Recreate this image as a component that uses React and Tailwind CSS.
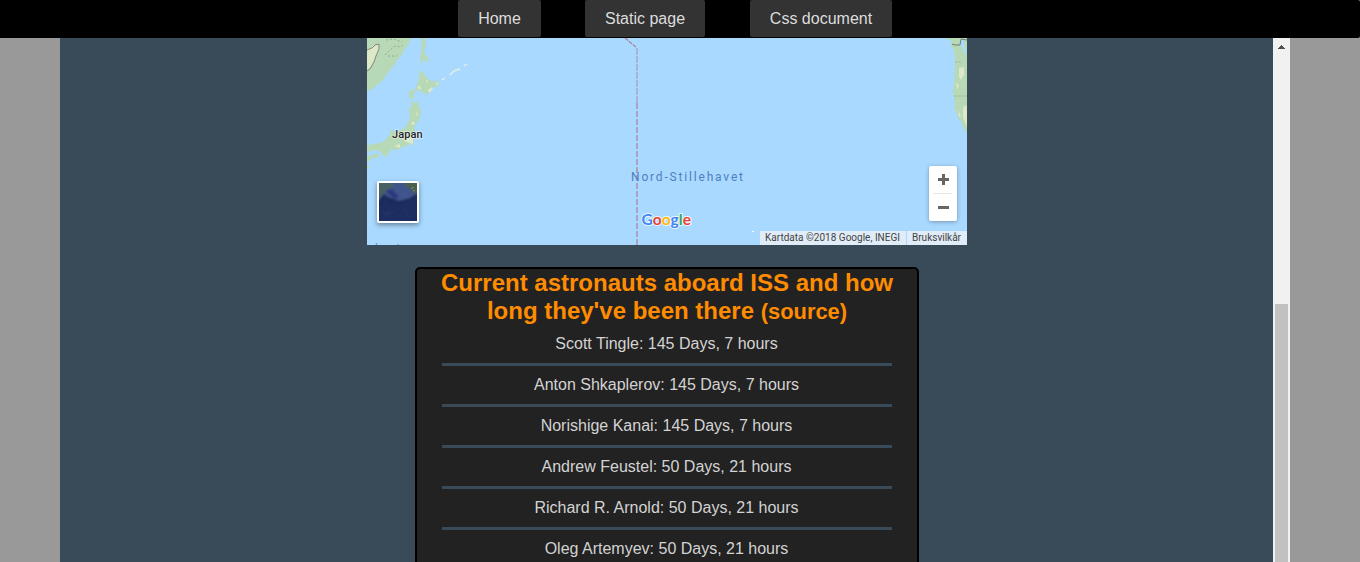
const astronauts = [
  "Scott Tingle: 145 Days, 7 hours",
  "Anton Shkaplerov: 145 Days, 7 hours",
  "Norishige Kanai: 145 Days, 7 hours",
  "Andrew Feustel: 50 Days, 21 hours",
  "Richard R. Arnold: 50 Days, 21 hours",
  "Oleg Artemyev: 50 Days, 21 hours",
];

function NavBar() {
  return (
    <nav className="flex h-[38px] shrink-0 justify-center rounded-r-[2px] bg-black pr-[10px] text-base leading-[37px] text-[#ddd]">
      <a className="mr-11 h-[37px] w-[83px] rounded-[2px] bg-[#333] text-center">Home</a>
      <a className="mr-[45px] h-[37px] w-[120px] rounded-[2px] bg-[#333] text-center">Static page</a>
      <a className="h-[37px] w-[142px] rounded-[2px] bg-[#333] text-center">Css document</a>
    </nav>
  );
}

function MapDrawing() {
  return (
    <svg width="600" height="207" viewBox="0 0 600 207" className="block">
      <rect width="600" height="207" fill="#a9d9ff" />
      <g fill="#b7d9b5">
        <path d="M0 0H44L41 7 37 12 34 18 30 22 28 26 23 32 19 37 16 42 10 47 5 51 0 53Z" />
        <path d="M54 0H58L59 7 57 15 60 18 62 22 61 24 56 21 55 26 54 26 53 20 55 10Z" />
        <path d="M53 31 56 35 61 41 66 44 71 42 71 46 73 48 67 49 63 51 61 57 55 54 50 52 46 56 48 60 44 61 42 58 42 54 46 51 47 53 50 47 52 40Z" />
        <path d="M44 63 48 65 51 63 51 66 54 74 52 82 48 87 48 93 47 98 46 107 43 107 43 104 40 108 36 109 30 112 24 111 21 117 17 119 14 114 9 112 0 114V107L13 105 17 103 21 99 24 95 23 92 26 93 30 94 36 91 40 87 43 80 42 70 45 68Z" />
        <path d="M0 118 5 117 11 115 12 119 5 120 2 123 0 124Z" />
        <path d="M578 0H600V95L596 89 594 83 591 80 590 76 587 70 588 65 586 54 588 35 588 17 586 10 583 6 586 4Z" />
      </g>
      <path d="M594 1 597 3 599 15 597 16 595 8 591 8 594 5Z" fill="#a9d9ff" />
      <g fill="#dce8c8">
        <path d="M0 12 4 10 7 7 12 6 12 12 9 18 7 23 3 30 0 32Z" />
        <path d="M50 50 53 47 54 52ZM61 52 65 49 66 51 62 55ZM68 46 71 44 71 47ZM43 86 47 83 48 87ZM37 101 46 98 46 106 39 104ZM49 76 51 73 50 79ZM27 108 33 106 33 110ZM59 42 61 43 60 46Z" />
        <path d="M592 30 597 29 597 37 594 42 592 39ZM596 69 600 67V89L596 80ZM591 72 594 78 592 79ZM589 44 592 48 590 51Z" />
      </g>
      <path d="M0 128H3L1 130H0Z" fill="#c8dd8e" />
      <g fill="none" stroke="#8cae91" strokeWidth="1" strokeDasharray="2 2">
        <path d="M18 17 23 12 28 8 34 9 37 6M19 2 26 1 35 4M21 18 30 18" />
      </g>
      <path d="M0 12 5 10 8 7 12 6 12 11 9 18 7 24 3 31 0 33" fill="none" stroke="#85877f" />
      <path d="M585 6 588 7 593 7 594 1 600 2" fill="none" stroke="#737d7a" />
      <path d="M588 24H594M587 58H600" stroke="#a3b7a0" strokeDasharray="3 1" />
      <path d="M75 42 78 40M83 37 87 33 93 31M97 28 100 26" stroke="#e4eee5" strokeWidth="1.5" fill="none" />
      <path d="M258 0 269.5 9.5" stroke="#aa7f96" strokeWidth="1.2" strokeDasharray="4 1" />
      <path d="M270 10V65" stroke="#aaa6c4" strokeWidth="1.5" strokeDasharray="7 1" />
      <path d="M270 65V207" stroke="#a9a1bd" strokeWidth="2" strokeDasharray="6 2" />
      <path d="M9.5 205V207M31 206V207" stroke="#739fd6" strokeWidth="1.5" />
      <path d="M385 193.5H387" stroke="#fff" />
      <g fontFamily="Roboto, sans-serif">
        <text x="25" y="100" fontSize="11" fontWeight="500" fill="#222" stroke="#fff" strokeOpacity=".6" strokeWidth="1.5" paintOrder="stroke" textLength="30.5">Japan</text>
        <text x="264" y="143" fontSize="12" fill="#4e7fc2" textLength="112">Nord-Stillehavet</text>
      </g>
      <text x="274.5" y="186.5" fontFamily="Lato, sans-serif" fontSize="16" fontWeight="700" stroke="#e8f5ff" strokeWidth="2" paintOrder="stroke" textLength="49.5" lengthAdjust="spacingAndGlyphs">
        <tspan fill="#4285f4">G</tspan><tspan fill="#ea4335">o</tspan><tspan fill="#fbbc05">o</tspan><tspan fill="#4285f4">g</tspan><tspan fill="#34a853">l</tspan><tspan fill="#ea4335">e</tspan>
      </text>
    </svg>
  );
}

function SatelliteThumb() {
  return (
    <div className="absolute top-[143px] left-[10px] size-[42px] rounded-[2px] border-2 border-white shadow-[0_2px_5px_rgba(0,0,0,0.4)]">
      <svg width="38" height="38" viewBox="0 0 38 38" className="block">
        <defs>
          <filter id="relief"><feGaussianBlur stdDeviation="1" /></filter>
        </defs>
        <rect width="38" height="38" fill="#1d2d60" />
        <g filter="url(#relief)">
          <path d="M-3 -3H41V11L31 16 20 18 9 14 4 13 -3 20Z" fill="#41558c" />
          <path d="M-3 -3H15L14 5 8 6 4 12 -3 16Z" fill="#4a6062" />
          <path d="M25 -3H41V9L34 10 31 5 26 3Z" fill="#4b604e" />
          <path d="M7 8 13 6 20 14 15 16Z" fill="#29397d" />
          <path d="M-1 21 5 12 12 17 20 19 31 16 40 10" fill="none" stroke="#152550" strokeWidth="1.5" />
          <path d="M2 28 13 35M4 31 16 28M24 25 32 35" stroke="#263a70" />
        </g>
        <path d="M32 6 35 4M34 8 36 7" stroke="#8d998f" strokeWidth=".7" />
      </svg>
    </div>
  );
}

function MapPanel() {
  return (
    <section className="relative h-[207px] w-[600px] shrink-0 overflow-hidden">
      <MapDrawing />
      <SatelliteThumb />
      <div className="absolute top-32 right-[10px] flex h-[55px] w-7 flex-col items-center rounded-[2px] bg-white shadow-[0_1px_4px_rgba(0,0,0,0.3)]">
        <svg width="28" height="55" viewBox="0 0 28 55">
          <path d="M9 13.5H20M14.5 8V19M9 41.5H20" stroke="#666" strokeWidth="3" />
          <path d="M4 27.5H23" stroke="#e6e6e6" />
        </svg>
      </div>
      <div className="absolute right-0 bottom-0 flex h-[14px] gap-px font-[Roboto,sans-serif] text-[10px] leading-[14px] whitespace-nowrap text-[#444]">
        <span className="w-[146px] bg-[#e0edf8]"><svg width="146" height="14" className="block"><text x="5" y="10" fontSize="10" fill="#444" textLength="135">Kartdata ©2018 Google, INEGI</text></svg></span>
        <span className="w-[60px] bg-[#e0edf8]"><svg width="60" height="14" className="block"><text x="5" y="10" fontSize="10" fill="#444" textLength="49">Bruksvilkår</text></svg></span>
      </div>
    </section>
  );
}

function AstronautCard() {
  return (
    <section className="mt-[22px] h-[400px] w-[504px] shrink-0 rounded-[5px] border-2 border-black bg-[#222] px-[25px] text-center">
      <h2 className="-mx-5 text-2xl leading-7 font-bold whitespace-nowrap text-[#ff8c00]">
        Current astronauts aboard ISS and how<br />
        long they've been there <span className="text-[21.9px]">(source)</span>
      </h2>
      <ul className="-mt-px text-base text-[#d3d3d3]">
        {astronauts.map((entry) => (
          <li key={entry} className="h-[41px] border-b-3 border-[#394b59] pt-[7px] pr-px leading-6">
            {entry}
          </li>
        ))}
      </ul>
    </section>
  );
}

function ScrollBar() {
  return (
    <div className="flex w-[17px] shrink-0 flex-col items-center bg-[#f1f1f1]">
      <svg width="17" height="17" viewBox="0 0 17 17" className="shrink-0" shapeRendering="crispEdges">
        <path d="M8 7H9V8H10V9H11V10H12V11H5V10H6V9H7V8H8Z" fill="#505050" />
      </svg>
      <div className="mt-[249px] w-[13px] flex-1 bg-[#c1c1c1]" />
    </div>
  );
}

export default function App() {
  return (
    <div className="flex h-[562px] w-[1360px] flex-col overflow-hidden bg-[#999] font-['Liberation_Sans',Arial,sans-serif]">
      <NavBar />
      <main className="mr-[70px] ml-[60px] flex min-h-0 flex-1">
        <div className="flex min-w-0 flex-1 flex-col items-center overflow-hidden bg-[#394b59]">
          <div className="flex flex-col items-center pl-px">
            <MapPanel />
            <AstronautCard />
          </div>
        </div>
        <ScrollBar />
      </main>
    </div>
  );
}
